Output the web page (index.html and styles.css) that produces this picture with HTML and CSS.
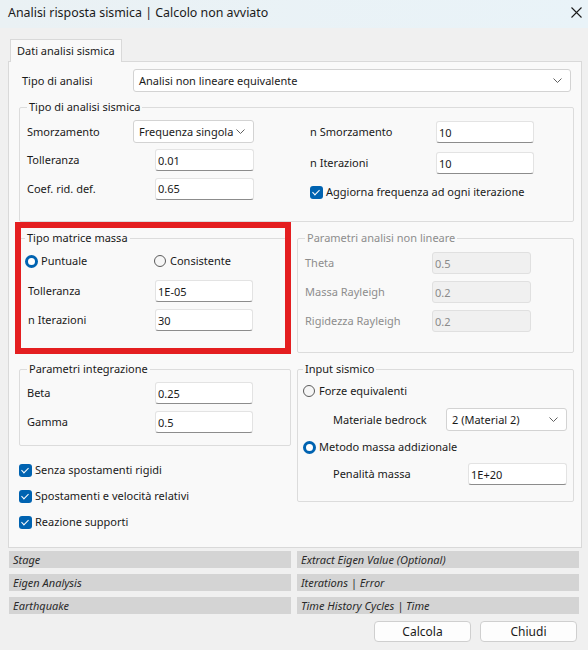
FILE: index.html
```html
<!DOCTYPE html>
<html lang="it">
<head>
    <meta charset="UTF-8">
    <title>Analisi risposta sismica</title>
    <link rel="stylesheet" href="styles.css">
</head>
<body>
<div class="window">
    <div class="titlebar">
        <span class="title">Analisi risposta sismica | Calcolo non avviato</span>
        <svg class="close" width="11" height="11" viewBox="0 0 11 11"><path d="M0.5 0.5L10.5 10.5M10.5 0.5L0.5 10.5" stroke="#1b1b1b" stroke-width="1.1" fill="none"/></svg>
    </div>

    <div class="tabs">
        <div class="tab">Dati analisi sismica</div>
    </div>

    <div class="panel">
        <div class="row top-row">
            <label class="lbl">Tipo di analisi</label>
            <div class="combo combo-wide"><span>Analisi non lineare equivalente</span><svg width="9" height="5" viewBox="0 0 9 5"><path d="M0.5 0.5L4.5 4.5L8.5 0.5" stroke="#606060" fill="none"/></svg></div>
        </div>

        <fieldset class="group sismica">
            <legend>Tipo di analisi sismica</legend>
            <div class="sis-left">
                <label class="lbl">Smorzamento</label>
                <div class="combo combo-small"><span>Frequenza singola</span><svg width="9" height="5" viewBox="0 0 9 5"><path d="M0.5 0.5L4.5 4.5L8.5 0.5" stroke="#606060" fill="none"/></svg></div>
                <label class="lbl">Tolleranza</label>
                <input class="field shifted" type="text" value="0.01">
                <label class="lbl">Coef. rid. def.</label>
                <input class="field shifted" type="text" value="0.65">
            </div>
            <div class="sis-right">
                <div class="row"><label class="lbl w126">n Smorzamento</label><input class="field" type="text" value="10"></div>
                <div class="row"><label class="lbl w126">n Iterazioni</label><input class="field" type="text" value="10"></div>
                <div class="check-row"><span class="check"></span>Aggiorna frequenza ad ogni iterazione</div>
            </div>
        </fieldset>

        <div class="lower">
            <div class="col">
                <div class="highlight">
                    <fieldset class="group matrice">
                        <legend>Tipo matrice massa</legend>
                        <div class="radios">
                            <div class="radio-row first"><span class="radio on"></span>Puntuale</div>
                            <div class="radio-row"><span class="radio"></span>Consistente</div>
                        </div>
                        <div class="row"><label class="lbl w127">Tolleranza</label><input class="field" type="text" value="1E-05"></div>
                        <div class="row"><label class="lbl w127">n Iterazioni</label><input class="field" type="text" value="30"></div>
                    </fieldset>
                    <span class="mark"></span>
                </div>

                <fieldset class="group integ">
                    <legend>Parametri integrazione</legend>
                    <div class="row"><label class="lbl w128">Beta</label><input class="field" type="text" value="0.25"></div>
                    <div class="row"><label class="lbl w128">Gamma</label><input class="field" type="text" value="0.5"></div>
                </fieldset>

                <div class="checks">
                    <div class="check-row"><span class="check"></span>Senza spostamenti rigidi</div>
                    <div class="check-row"><span class="check"></span>Spostamenti e velocità relativi</div>
                    <div class="check-row"><span class="check"></span>Reazione supporti</div>
                </div>
            </div>

            <div class="col">
                <fieldset class="group nonlin" disabled>
                    <legend>Parametri analisi non lineare</legend>
                    <div class="row"><label class="lbl w127">Theta</label><input class="field" type="text" value="0.5" disabled></div>
                    <div class="row"><label class="lbl w127">Massa Rayleigh</label><input class="field" type="text" value="0.2" disabled></div>
                    <div class="row"><label class="lbl w127">Rigidezza Rayleigh</label><input class="field" type="text" value="0.2" disabled></div>
                </fieldset>

                <fieldset class="group sismico">
                    <legend>Input sismico</legend>
                    <div class="radio-row"><span class="radio"></span>Forze equivalenti</div>
                    <div class="row sub first"><label class="lbl w113">Materiale bedrock</label><div class="combo combo-small"><span>2 (Material 2)</span><svg width="9" height="5" viewBox="0 0 9 5"><path d="M0.5 0.5L4.5 4.5L8.5 0.5" stroke="#606060" fill="none"/></svg></div></div>
                    <div class="radio-row"><span class="radio on"></span>Metodo massa addizionale</div>
                    <div class="row sub"><label class="lbl w135">Penalità massa</label><input class="field" type="text" value="1E+20"></div>
                </fieldset>
            </div>
        </div>
    </div>

    <div class="status">
        <div class="bar">Stage</div>
        <div class="bar">Extract Eigen Value (Optional)</div>
        <div class="bar">Eigen Analysis</div>
        <div class="bar">Iterations | Error</div>
        <div class="bar">Earthquake</div>
        <div class="bar">Time History Cycles | Time</div>
    </div>

    <div class="actions">
        <button class="btn">Calcola</button>
        <button class="btn">Chiudi</button>
    </div>
</div>
</body>
</html>
```

FILE: styles.css
```css
body {
    margin: 0;
    background-color: #f0f0f0;
}

.window {
    width: 588px;
    height: 650px;
    background-color: #f0f0f0;
    font-family: "Noto Sans", "Open Sans", sans-serif;
    font-size: 11px;
    line-height: 16px;
    color: #1a1a1a;
}

/* barra del titolo */
.titlebar {
    height: 28px;
    display: flex;
    align-items: center;
    justify-content: space-between;
    padding: 0 6px 2px 8px;
    box-sizing: border-box;
    background: linear-gradient(to right, #eaf1f4, #e9f3f8);
}

.title {
    font-size: 12.4px;
}

.close {
    margin-top: -2px;
}

.tabs {
    display: flex;
    padding-left: 10px;
    margin-top: 11px;
}

.tab {
    position: relative;
    z-index: 1;
    height: 23px;
    box-sizing: border-box;
    padding: 3px 6px 0 6px;
    margin-bottom: -1px;
    background-color: #f9f9f9;
    border: 1px solid #d9d9d9;
    border-bottom: none;
}

.panel {
    margin-left: 8px;
    width: 574px;
    height: 487px;
    box-sizing: border-box;
    padding: 7px 7px 0 10px;
    background-color: #f9f9f9;
    border: 1px solid #d9d9d9;
}

.row {
    display: flex;
    align-items: center;
}

.top-row {
    padding-left: 3px;
}

.top-row .lbl {
    width: 111px;
}

.lbl {
    flex: none;
}

.w113 { width: 113px; }
.w126 { width: 126px; }
.w127 { width: 127px; }
.w128 { width: 128px; }
.w135 { width: 135px; }

/* combo box */
.combo {
    height: 23px;
    box-sizing: border-box;
    display: flex;
    align-items: center;
    justify-content: space-between;
    padding: 0 8px 0 5px;
    white-space: nowrap;
    background-color: #fff;
    border: 1px solid #d3d3d3;
    border-radius: 3px;
}

.combo-wide {
    width: 438px;
}

.combo-small {
    width: 121px;
}

/* caselle di testo */
.field {
    width: 99px;
    height: 22px;
    box-sizing: border-box;
    margin: 0;
    padding: 0 2px;
    font-family: inherit;
    font-size: 11px;
    color: #1a1a1a;
    background-color: #fff;
    border: 1px solid #e3e3e3;
    border-bottom-color: #8c8c8c;
    border-radius: 3px;
    outline: none;
}

.field:disabled {
    background-color: #f0f0f0;
    border-color: #e0e0e0;
    color: #8a8a8a;
}

/* group box */
.group {
    margin: 0;
    min-width: 0;
    border: 1px solid #dcdcdc;
    border-radius: 2px;
}

.group legend {
    padding: 0 2px;
    margin-left: 0;
    line-height: 16px;
}

.sismica {
    margin-top: 7px;
    padding: 5px 0 21px 7px;
    display: grid;
    grid-template-columns: 283px 1fr;
}

.sis-left {
    display: grid;
    grid-template-columns: 106px 22px 99px;
    row-gap: 6px;
    align-items: center;
}

.sis-left .combo {
    grid-column: 2 / 4;
}

.sis-left .field {
    grid-column: 3;
}

.sis-left .lbl {
    grid-column: 1;
}

.sis-right {
    display: flex;
    flex-direction: column;
    gap: 9px;
    padding-top: 1px;
}

.sis-right .field {
    width: 98px;
}

.sis-right .check-row {
    margin-top: 1px;
}

.lower {
    display: grid;
    grid-template-columns: 272px 1fr;
    column-gap: 6px;
    margin-top: 8px;
}

.col {
    display: flex;
    flex-direction: column;
}

/* evidenziazione rossa */
.highlight {
    position: relative;
}

.mark {
    position: absolute;
    left: -4px;
    right: 0;
    top: -8px;
    bottom: -3px;
    border: 6px solid #e41e20;
    pointer-events: none;
}

.matrice {
    padding: 7px 0 19px 5px;
}

.radios {
    display: flex;
    margin-bottom: 11px;
}

.radios .first {
    width: 129px;
}

.matrice .row {
    padding-left: 3px;
}

.matrice .row + .row {
    margin-top: 7px;
}

.matrice .field {
    width: 98px;
}

.integ {
    margin-top: 10px;
    padding: 5px 0 12px 7px;
}

.integ .row + .row {
    margin-top: 7px;
}

.integ .field {
    width: 98px;
}

.nonlin {
    padding: 6px 0 20px 7px;
    color: #8d8d8d;
}

.nonlin .row + .row {
    margin-top: 7px;
}

.sismico {
    margin-top: 8px;
    padding: 6px 0 16px 5px;
}

.sismico .sub {
    padding-left: 30px;
    margin-top: 8px;
}

.sismico .sub.first {
    margin-top: 9px;
    margin-bottom: 8px;
}

/* radio e checkbox */
.radio-row,
.check-row {
    display: flex;
    align-items: center;
    height: 16px;
}

.radio {
    width: 12px;
    height: 12px;
    box-sizing: border-box;
    margin-right: 4px;
    border: 1px solid #5c5c5c;
    border-radius: 50%;
    background-color: #f6f6f6;
}

.radio.on {
    width: 13px;
    height: 13px;
    margin-right: 3px;
    border: 3.5px solid #0063b1;
    background-color: #fff;
}

.check {
    position: relative;
    width: 13px;
    height: 13px;
    margin-right: 3px;
    border-radius: 3px;
    background-color: #0063b1;
}

.check::after {
    content: "";
    position: absolute;
    left: 4px;
    top: 2px;
    width: 3px;
    height: 6px;
    border: solid #fff;
    border-width: 0 1px 1px 0;
    transform: rotate(45deg);
}

.checks {
    display: flex;
    flex-direction: column;
    gap: 10px;
    margin-top: 16px;
}

/* barre di stato */
.status {
    display: grid;
    grid-template-columns: 282px 282px;
    column-gap: 6px;
    row-gap: 6px;
    margin: 3px 0 0 9px;
}

.bar {
    height: 17px;
    padding-left: 4px;
    background-color: #d4d4d4;
    color: #2a2a2a;
    font-size: 11px;
    font-style: italic;
    line-height: 17px;
}

.actions {
    display: flex;
    justify-content: flex-end;
    gap: 9px;
    padding-right: 11px;
    margin-top: 7px;
}

.btn {
    width: 97px;
    height: 21px;
    padding: 0;
    font-family: inherit;
    font-size: 12px;
    color: #1a1a1a;
    background-color: #fdfdfd;
    border: 1px solid #cfcfcf;
    border-radius: 4px;
}
```
